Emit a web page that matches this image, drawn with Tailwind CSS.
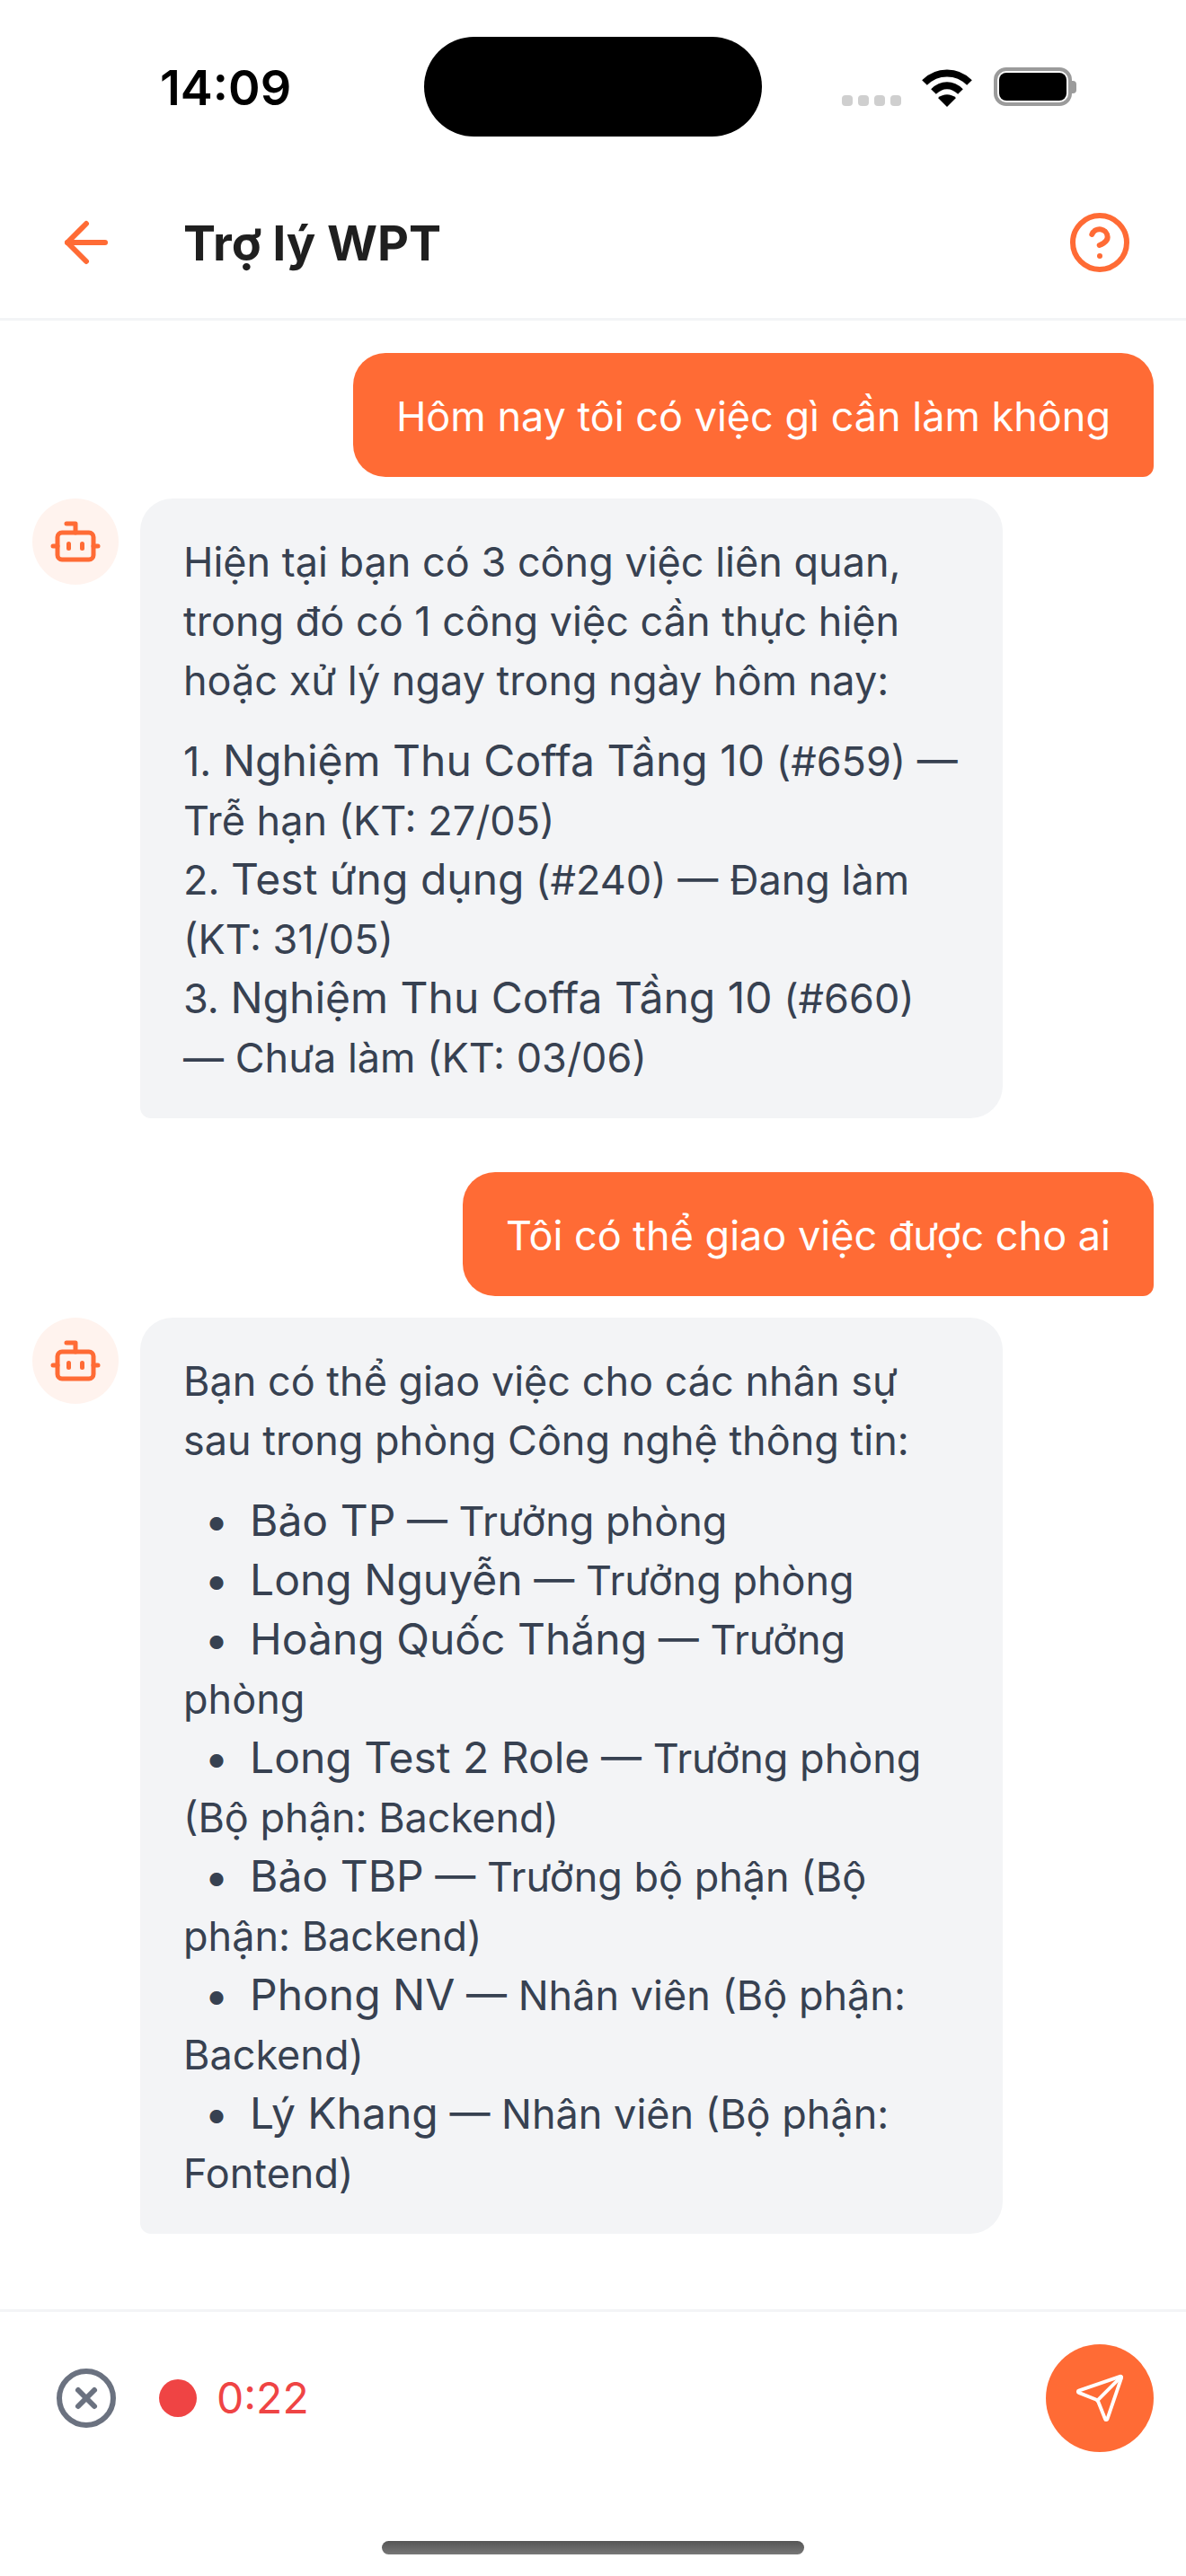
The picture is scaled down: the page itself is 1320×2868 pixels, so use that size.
<!DOCTYPE html>
<html lang="en">
<head>
    <meta charset="UTF-8">
    <title>Trợ lý WPT</title>
    <script src="https://cdn.jsdelivr.net/npm/@tailwindcss/browser@4"></script>
</head>
<body class="bg-white font-['Inter',sans-serif]">
<div class="w-[1320px] h-[2868px] flex flex-col relative overflow-hidden">

    <!-- Status bar -->
    <div class="h-[195px] shrink-0 relative flex items-start">
        <div class="ml-[178px] mt-[68px] text-[54px] leading-[60px] font-semibold text-black">14:09</div>
        <div class="absolute left-[472px] top-[41px] w-[376px] h-[111px] rounded-[56px] bg-black"></div>
        <div class="absolute left-[937px] top-[106px] flex gap-[6px]">
            <div class="w-[12px] h-[12px] rounded-[4px] bg-[#cfcfcf]"></div>
            <div class="w-[12px] h-[12px] rounded-[4px] bg-[#cfcfcf]"></div>
            <div class="w-[12px] h-[12px] rounded-[4px] bg-[#cfcfcf]"></div>
            <div class="w-[12px] h-[12px] rounded-[4px] bg-[#cfcfcf]"></div>
        </div>
        <svg class="absolute left-[1025px] top-[75px]" width="58" height="44" viewBox="0 0 58 44">
            <path d="M4 17 C18 3 40 3 54 17" fill="none" stroke="#000" stroke-width="8"/>
            <path d="M14 27 C23 18 35 18 44 27" fill="none" stroke="#000" stroke-width="8"/>
            <path d="M29 44 L19 34 C25 29 33 29 39 34 Z" fill="#000"/>
        </svg>
        <div class="absolute left-[1106px] top-[75px] w-[87px] h-[43px] rounded-[14px] border-[4px] border-[#9b9b9b] p-[2px]">
            <div class="w-full h-full rounded-[8px] bg-black"></div>
        </div>
        <div class="absolute left-[1193px] top-[90px] w-[5px] h-[14px] rounded-r-[4px] bg-[#9b9b9b]"></div>
    </div>

    <!-- Header -->
    <div class="h-[162px] shrink-0 flex items-center justify-between pl-[60px] pr-[60px] pb-[9px] border-b-[3px] border-[#f3f4f6]">
        <div class="flex items-center gap-[72px]">
            <svg width="72" height="72" viewBox="0 0 24 24" fill="none" stroke="#ff6b35" stroke-width="2" stroke-linecap="round" stroke-linejoin="round">
                <path d="M19 12H5"/><path d="M12 19l-7-7 7-7"/>
            </svg>
            <div class="text-[54px] font-bold text-[#1f1f1f]">Trợ lý WPT</div>
        </div>
        <svg width="72" height="72" viewBox="0 0 24 24" fill="none" stroke="#ff6b35" stroke-width="2" stroke-linecap="round" stroke-linejoin="round">
            <circle cx="12" cy="12" r="10"/><path d="M9.1 9a3 3 0 0 1 5.8 1c0 2-3 3-3 3"/><path d="M12 17h.01"/>
        </svg>
    </div>

    <!-- Messages -->
    <div class="flex-1 flex flex-col px-[36px] pt-[36px]">
        <div class="self-end bg-[#ff6b35] text-white text-[45px] leading-[66px] px-[48px] pt-[38px] pb-[34px] rounded-t-[36px] rounded-bl-[36px] rounded-br-[12px]">Hôm nay tôi có việc gì cần làm không</div>

        <div class="flex gap-[24px] mt-[24px]">
            <div class="w-[96px] h-[96px] rounded-full bg-[#fff3ee] flex items-center justify-center shrink-0">
                <svg width="60" height="60" viewBox="0 0 24 24" fill="none" stroke="#ff6b35" stroke-width="2" stroke-linecap="round" stroke-linejoin="round"><path d="M12 8V4H8"/><rect x="4" y="8" width="16" height="12" rx="2"/><path d="M2 14h2"/><path d="M20 14h2"/><path d="M15 13v2"/><path d="M9 13v2"/></svg>
            </div>
            <div class="w-[960px] bg-[#f3f4f6] rounded-t-[36px] rounded-br-[36px] rounded-bl-[12px] px-[48px] pt-[38px] pb-[34px] text-[#374151] text-[45px] leading-[66px]">
                <p>Hiện tại bạn có 3 công việc liên quan, trong đó có 1 công việc cần thực hiện hoặc xử lý ngay trong ngày hôm nay:</p>
                <p class="mt-[24px]">1. <span class="text-[48px] leading-[0]">Nghiệm Thu Coffa Tầng 10</span> (#659) — Trễ hạn (KT: 27/05)<br>2. <span class="text-[48px] leading-[0]">Test ứng dụng</span> (#240) — Đang làm (KT: 31/05)<br>3. <span class="text-[48px] leading-[0]">Nghiệm Thu Coffa Tầng 10</span> (#660) — Chưa làm (KT: 03/06)</p>
            </div>
        </div>

        <div class="self-end bg-[#ff6b35] text-white text-[45px] leading-[66px] px-[48px] pt-[38px] pb-[34px] rounded-t-[36px] rounded-bl-[36px] rounded-br-[12px] mt-[60px]">Tôi có thể giao việc được cho ai</div>

        <div class="flex gap-[24px] mt-[24px]">
            <div class="w-[96px] h-[96px] rounded-full bg-[#fff3ee] flex items-center justify-center shrink-0">
                <svg width="60" height="60" viewBox="0 0 24 24" fill="none" stroke="#ff6b35" stroke-width="2" stroke-linecap="round" stroke-linejoin="round"><path d="M12 8V4H8"/><rect x="4" y="8" width="16" height="12" rx="2"/><path d="M2 14h2"/><path d="M20 14h2"/><path d="M15 13v2"/><path d="M9 13v2"/></svg>
            </div>
            <div class="w-[960px] bg-[#f3f4f6] rounded-t-[36px] rounded-br-[36px] rounded-bl-[12px] px-[48px] pt-[38px] pb-[34px] text-[#374151] text-[45px] leading-[66px]">
                <p>Bạn có thể giao việc cho các nhân sự sau trong phòng Công nghệ thông tin:</p>
                <ul class="mt-[24px]">
                    <li><span class="inline-block w-[74px] text-center text-[48px] leading-[0]">•</span><span class="text-[48px] leading-[0]">Bảo TP</span> — Trưởng phòng</li>
                    <li><span class="inline-block w-[74px] text-center text-[48px] leading-[0]">•</span><span class="text-[48px] leading-[0]">Long Nguyễn</span> — Trưởng phòng</li>
                    <li><span class="inline-block w-[74px] text-center text-[48px] leading-[0]">•</span><span class="text-[48px] leading-[0]">Hoàng Quốc Thắng</span> — Trưởng phòng</li>
                    <li><span class="inline-block w-[74px] text-center text-[48px] leading-[0]">•</span><span class="text-[48px] leading-[0]">Long Test 2 Role</span> — Trưởng phòng (Bộ phận: Backend)</li>
                    <li><span class="inline-block w-[74px] text-center text-[48px] leading-[0]">•</span><span class="text-[48px] leading-[0]">Bảo TBP</span> — Trưởng bộ phận (Bộ phận: Backend)</li>
                    <li><span class="inline-block w-[74px] text-center text-[48px] leading-[0]">•</span><span class="text-[48px] leading-[0]">Phong NV</span> — Nhân viên (Bộ phận: Backend)</li>
                    <li><span class="inline-block w-[74px] text-center text-[48px] leading-[0]">•</span><span class="text-[48px] leading-[0]">Lý Khang</span> — Nhân viên (Bộ phận: Fontend)</li>
                </ul>
            </div>
        </div>
    </div>

    <!-- Input bar -->
    <div class="h-[297px] shrink-0 border-t-[3px] border-[#f3f4f6] flex items-start justify-between pl-[60px] pr-[36px] pt-[36px]">
        <div class="flex items-center h-[120px]">
            <svg width="72" height="72" viewBox="0 0 24 24" fill="none" stroke="#6b7280" stroke-width="2" stroke-linecap="round" stroke-linejoin="round"><circle cx="12" cy="12" r="10"/><path d="M15 9l-6 6"/><path d="M9 9l6 6"/></svg>
            <div class="w-[42px] h-[42px] rounded-full bg-[#ef4444] ml-[45px]"></div>
            <div class="text-[48px] text-[#ef4444] ml-[22px]">0:22</div>
        </div>
        <div class="w-[120px] h-[120px] rounded-full bg-[#ff6b35] flex items-center justify-center">
            <svg width="58" height="58" viewBox="0 0 24 24" fill="none" stroke="#fff" stroke-width="1.6" stroke-linecap="round" stroke-linejoin="round"><path d="M14.536 21.686a.5.5 0 0 0 .937-.024l6.5-19a.496.496 0 0 0-.635-.635l-19 6.5a.5.5 0 0 0-.024.937l7.93 3.18a2 2 0 0 1 1.112 1.11z"/><path d="m21.854 2.147-10.94 10.939"/></svg>
        </div>
    </div>

    <!-- Home indicator -->
    <div class="absolute left-[425px] bottom-[24px] w-[470px] h-[15px] rounded-full bg-gradient-to-b from-[#555] to-[#777]"></div>
</div>
</body>
</html>
